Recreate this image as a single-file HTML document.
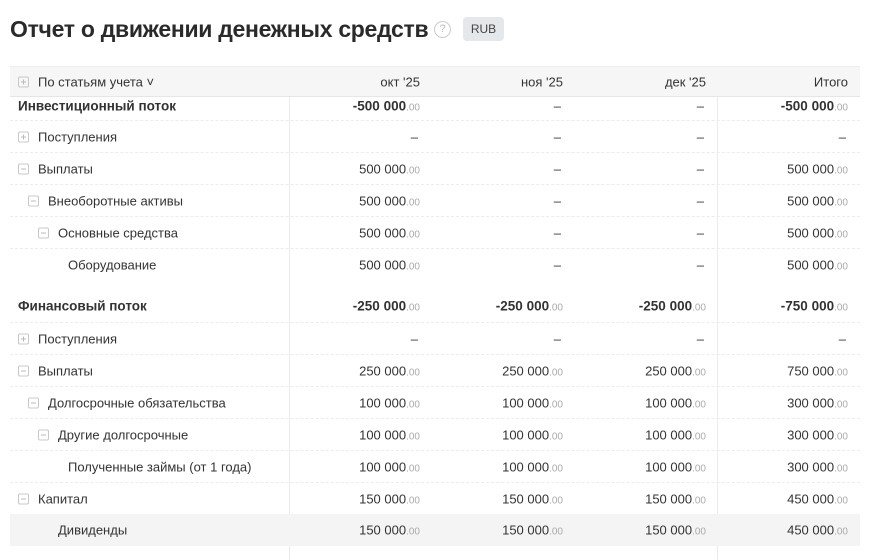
<!DOCTYPE html>
<html><head><meta charset="utf-8"><style>
*{margin:0;padding:0;box-sizing:border-box}
body{width:870px;height:560px;background:#fff;font-family:"Liberation Sans",Arial,sans-serif;color:#333;position:relative;overflow:hidden}
.title{position:absolute;left:10px;top:16px;font-size:23px;font-weight:bold;color:#2a2a2a;letter-spacing:-0.3px}
.q{position:absolute;left:434px;top:21px;width:17px;height:17px;border:1px solid #ccc;border-radius:50%;font-size:11px;color:#bbb;text-align:center;line-height:15px}
.rub{position:absolute;left:463px;top:17px;width:41px;height:24px;background:#e4e8ea;border-radius:4px;font-size:12px;color:#444;text-align:center;line-height:24px}
.hdr{position:absolute;left:10px;top:66px;width:850px;height:31px;background:#f6f6f6;border-top:1px solid #eee;border-bottom:1px solid #e6e6e6;z-index:2}
.vl{position:absolute;top:97px;bottom:0;width:1px;background:#ebebeb}
.row{position:absolute;left:10px;width:850px;font-size:13px}
.row.b{border-bottom:1px dashed #ececec}
.row span{position:absolute;top:50%;transform:translateY(-50%);white-space:nowrap}
.d{color:#aaa;font-size:10px}
.bold{font-weight:bold;font-size:13.5px}
.ic{display:inline-block;width:11px;height:11px;border:1px solid #c8c8c8;border-radius:2px;position:relative;vertical-align:middle;margin-right:9px;top:-1px}
.ic:before{content:"";position:absolute;left:2px;right:2px;top:4px;height:1px;background:#bbb}
.ic.p:after{content:"";position:absolute;top:2px;bottom:2px;left:4px;width:1px;background:#bbb}
</style></head><body>
<div class="title">Отчет о движении денежных средств</div>
<div class="q">?</div>
<div class="rub">RUB</div>
<div class="hdr"></div>
<div class="row" style="top:66px;height:31px;z-index:3"><span style="left:8px"><i class="ic p"></i>По статьям учета ˅</span>
<span style="right:440px">окт '25</span><span style="right:297px">ноя '25</span><span style="right:154px">дек '25</span><span style="right:12px">Итого</span></div>
<div class="vl" style="left:289px"></div>
<div class="vl" style="left:717px"></div>
<div id="rows"></div>
<script>
var R=[
[91,30,"Инвестиционный поток",0,"",1,["-500 000","–","–","-500 000"],1],
[121,32,"Поступления",0,"p",0,["–","–","–","–"],1],
[153,32,"Выплаты",0,"m",0,["500 000","–","–","500 000"],1],
[185,32,"Внеоборотные активы",10,"m",0,["500 000","–","–","500 000"],1],
[217,32,"Основные средства",20,"m",0,["500 000","–","–","500 000"],1],
[249,32,"Оборудование",50,"",0,["500 000","–","–","500 000"],0],
[290,33,"Финансовый поток",0,"",1,["-250 000","-250 000","-250 000","-750 000"],1],
[323,32,"Поступления",0,"p",0,["–","–","–","–"],1],
[355,32,"Выплаты",0,"m",0,["250 000","250 000","250 000","750 000"],1],
[387,32,"Долгосрочные обязательства",10,"m",0,["100 000","100 000","100 000","300 000"],1],
[419,32,"Другие долгосрочные",20,"m",0,["100 000","100 000","100 000","300 000"],1],
[451,32,"Полученные займы (от 1 года)",50,"",0,["100 000","100 000","100 000","300 000"],1],
[483,31,"Капитал",0,"m",0,["150 000","150 000","150 000","450 000"],0],
[514,32,"Дивиденды",40,"",0,["150 000","150 000","150 000","450 000"],0]
];
var h="",rs=[440,297,154,12];
R.forEach(function(r,i){
 var st="top:"+r[0]+"px;height:"+r[1]+"px;"+(i==13?"background:#f4f4f4;":"");
 h+='<div class="row'+(r[7]?' b':'')+'" style="'+st+'"><span class="'+(r[5]?'bold':'')+'" style="left:'+(8+r[3])+'px">'+(r[4]?'<i class="ic '+r[4]+'"></i>':'')+r[2]+'</span>';
 r[6].forEach(function(v,j){
  var t=v=="–"?'<span style="right:'+(rs[j]+2)+'px">–</span>':'<span class="'+(r[5]?'bold':'')+'" style="right:'+rs[j]+'px">'+v+'<b class="d" style="font-weight:normal">.00</b></span>';
  h+=t;});
 h+='</div>';});
document.getElementById("rows").innerHTML=h;
</script>
</body></html>
